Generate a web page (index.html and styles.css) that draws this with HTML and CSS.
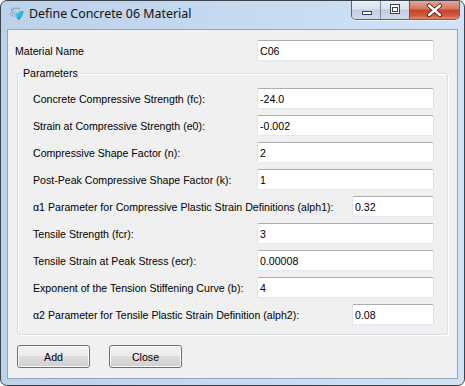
FILE: index.html
```html
<!DOCTYPE html>
<html lang="en">
<head>
  <meta charset="UTF-8">
  <title>Define Concrete 06 Material</title>
  <link rel="stylesheet" href="styles.css">
</head>
<body>
<div class="window">
  <div class="titlebar">
    <svg class="app-icon" width="16" height="16" viewBox="0 0 16 16">
      <path d="M2 9 L5 4 M4 10 L7 5 M6 11 L9 6" stroke="#8a8f96" stroke-width="1.2" stroke-dasharray="1 1" fill="none"/>
      <path d="M3 4 Q7 1 12 3" stroke="#6f757d" stroke-width="1.2" stroke-dasharray="1 1" fill="none"/>
      <polygon points="8,9 12,5 16,5 12,10 9,13" fill="#1fc4e6"/>
      <polygon points="9,13 12,10 16,5 14,10 11,14" fill="#0e9fc4"/>
    </svg>
    <span class="title">Define Concrete 06 Material</span>
    <div class="caption-buttons">
      <div class="cap-btn cap-min">
        <svg width="28" height="18" viewBox="0 0 28 18">
          <rect x="10.5" y="10.5" width="9" height="3" fill="#fff" stroke="#3b4450"/>
        </svg>
      </div>
      <div class="cap-btn cap-max">
        <svg width="28" height="18" viewBox="0 0 28 18">
          <rect x="9.5" y="3.5" width="9" height="9" fill="#fff" stroke="#3b4450"/>
          <rect x="11.5" y="6.5" width="5" height="4" fill="none" stroke="#3b4450"/>
        </svg>
      </div>
      <div class="cap-btn cap-close">
        <svg width="49" height="18" viewBox="0 0 49 18">
          <path d="M19 4.5 L30 14 M30 4.5 L19 14" stroke="#4a1b10" stroke-width="4.2" stroke-linecap="round"/>
          <path d="M19 4.5 L30 14 M30 4.5 L19 14" stroke="#ffffff" stroke-width="2.4" stroke-linecap="round"/>
        </svg>
      </div>
    </div>
  </div>

  <div class="client">
    <div class="row name-row">
      <label>Material Name</label>
      <input type="text" value="C06" />
    </div>

    <fieldset class="group">
      <legend>Parameters</legend>
      <div class="params">
        <div class="row">
          <label>Concrete Compressive Strength (fc):</label>
          <input type="text" value="-24.0" />
        </div>
        <div class="row">
          <label>Strain at Compressive Strength (e0):</label>
          <input type="text" value="-0.002" />
        </div>
        <div class="row">
          <label>Compressive Shape Factor (n):</label>
          <input type="text" value="2" />
        </div>
        <div class="row">
          <label>Post-Peak Compressive Shape Factor (k):</label>
          <input type="text" value="1" />
        </div>
        <div class="row">
          <label>α1 Parameter for Compressive Plastic Strain Definitions (alph1):</label>
          <input type="text" class="short" value="0.32" />
        </div>
        <div class="row">
          <label>Tensile Strength (fcr):</label>
          <input type="text" value="3" />
        </div>
        <div class="row">
          <label>Tensile Strain at Peak Stress (ecr):</label>
          <input type="text" value="0.00008" />
        </div>
        <div class="row">
          <label>Exponent of the Tension Stiffening Curve (b):</label>
          <input type="text" value="4" />
        </div>
        <div class="row">
          <label>α2 Parameter for Tensile Plastic Strain Definition (alph2):</label>
          <input type="text" class="short" value="0.08" />
        </div>
      </div>
    </fieldset>

    <div class="actions">
      <button>Add</button>
      <button>Close</button>
    </div>
  </div>
</div>
</body>
</html>
```

FILE: styles.css
```css
html, body {
  margin: 0;
  background: #ffffff;
}

body {
  font-family: 'Liberation Sans', Arial, sans-serif;
  font-size: 10.6px;
  color: #000000;
}

.window {
  display: flex;
  flex-direction: column;
  box-sizing: border-box;
  width: 465px;
  height: 386px;
  padding: 0 6px 6px;
  border: 1px solid #3d434c;
  border-radius: 7px;
  background: linear-gradient(to right, #bcd2eb, #c6daf0 55%, #d2e3f5);
}

/* title bar */

.titlebar {
  display: flex;
  align-items: flex-start;
  height: 28px;
}

.app-icon {
  margin: 5px 0 0 1px;
}

.title {
  margin: 5px 0 0 5px;
  font-family: 'Noto Sans', 'Open Sans', sans-serif;
  font-size: 12.4px;
  line-height: 16px;
  color: #111111;
}

.caption-buttons {
  display: flex;
  margin: 0 -2px 0 auto;
  border: 1px solid #58657a;
  border-top: 0;
  border-radius: 0 0 5px 5px;
  overflow: hidden;
  box-shadow: 0 1px 0 rgba(255, 255, 255, 0.6);
}

.cap-btn {
  height: 18px;
}

.cap-btn svg {
  display: block;
}

.cap-min,
.cap-max {
  width: 28px;
  background: linear-gradient(#e9eff7, #d8e2ee 45%, #bfcddf 50%, #cfdcea);
}

.cap-min {
  border-right: 1px solid #7c8a9d;
}

.cap-max {
  border-right: 1px solid #6e5550;
}

.cap-close {
  width: 49px;
  background: linear-gradient(#e6a796, #d47561 45%, #c2442a 50%, #d0583c 80%, #e28c6f);
}

/* client area */

.client {
  flex: 1;
  padding: 10px 9px 0 7px;
  border: 1px solid #93a6bd;
  background: #f0f0f0;
}

.row {
  display: flex;
  align-items: center;
  justify-content: space-between;
  height: 21px;
}

.row label {
  padding-top: 1px;
  white-space: nowrap;
}

.name-row {
  padding-right: 14px;
}

input {
  box-sizing: border-box;
  width: 177px;
  height: 21px;
  margin: 0;
  padding: 1px 2px 0;
  border: 1px solid;
  border-color: #abadb3 #dbdfe6 #e3e9ef #e2e3ea;
  border-radius: 2px;
  background: #ffffff;
  font-family: inherit;
  font-size: 10.6px;
  color: #000000;
  outline: none;
}

input.short {
  width: 82px;
}

.group {
  margin: 5px 0 0 2px;
  padding: 8px 13px 9px 4px;
  border: 1px solid #d5dfe5;
  border-radius: 3px;
  box-shadow: inset 1px 1px 0 #ffffff, 1px 1px 0 #ffffff;
}

.group legend {
  padding: 0 1px;
  line-height: 14px;
}

.params {
  display: flex;
  flex-direction: column;
  gap: 6px;
  padding-left: 11px;
}

/* buttons */

.actions {
  display: flex;
  gap: 19px;
  margin: 10px 0 0 2px;
}

.actions button {
  box-sizing: border-box;
  width: 73px;
  height: 23px;
  padding: 0;
  border: 1px solid #707070;
  border-radius: 3px;
  background: linear-gradient(#f2f2f2, #ebebeb 50%, #dddddd 50%, #cfcfcf);
  box-shadow: inset 0 0 0 1px #fcfcfc;
  font-family: inherit;
  font-size: 10.6px;
  color: #000000;
}
```
